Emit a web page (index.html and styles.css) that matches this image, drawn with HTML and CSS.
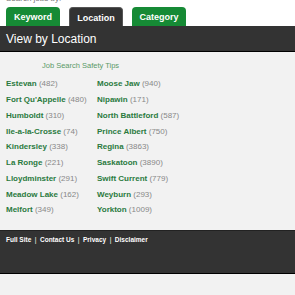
FILE: index.html
```html
<!DOCTYPE html>
<html lang="en">
<head>
    <meta charset="UTF-8">
    <meta name="viewport" content="width=device-width, initial-scale=1.0">
    <title>View by Location</title>
    <link rel="stylesheet" href="styles.css">
</head>
<body>
    <div class="top">
        <p class="intro">Search jobs by:</p>
        <ul class="tabs">
            <li><a href="#" class="tab">Keyword</a></li>
            <li><a href="#" class="tab active">Location</a></li>
            <li><a href="#" class="tab">Category</a></li>
        </ul>
    </div>

    <h2 class="bar">View by Location</h2>

    <div class="content">
        <p class="tips"><a href="#">Job Search Safety Tips</a></p>

        <ul class="locations">
            <li><a href="#">Estevan</a> (482)</li>
            <li><a href="#">Moose Jaw</a> (940)</li>
            <li><a href="#">Fort Qu'Appelle</a> (480)</li>
            <li><a href="#">Nipawin</a> (171)</li>
            <li><a href="#">Humboldt</a> (310)</li>
            <li><a href="#">North Battleford</a> (587)</li>
            <li><a href="#">Ile-a-la-Crosse</a> (74)</li>
            <li><a href="#">Prince Albert</a> (750)</li>
            <li><a href="#">Kindersley</a> (338)</li>
            <li><a href="#">Regina</a> (3863)</li>
            <li><a href="#">La Ronge</a> (221)</li>
            <li><a href="#">Saskatoon</a> (3890)</li>
            <li><a href="#">Lloydminster</a> (291)</li>
            <li><a href="#">Swift Current</a> (779)</li>
            <li><a href="#">Meadow Lake</a> (162)</li>
            <li><a href="#">Weyburn</a> (293)</li>
            <li><a href="#">Melfort</a> (349)</li>
            <li><a href="#">Yorkton</a> (1009)</li>
        </ul>
    </div>

    <div class="footer">
        <a href="#">Full Site</a><span class="sep">|</span><a href="#">Contact Us</a><span class="sep">|</span><a href="#">Privacy</a><span class="sep">|</span><a href="#">Disclaimer</a>
    </div>
</body>
</html>
```

FILE: styles.css
```css
body {
    margin: 0;
    font-family: "Liberation Sans", Arial, sans-serif;
    background-color: #f2f2f2;
    color: #333;
}

a {
    text-decoration: none;
}

/* 上部：タブ */
.top {
    background-color: #fff;
    padding: 0 6px;
    height: 26px;
    overflow: hidden;
}

.intro {
    margin: -6px 0 0;
    height: 13px;
    font-size: 8px;
    line-height: 10px;
    color: #777;
}

.tabs {
    list-style: none;
    margin: 0;
    padding: 0;
    display: flex;
    gap: 9px;
}

.tab {
    display: flex;
    align-items: center;
    justify-content: center;
    width: 54px;
    height: 19px;
    box-sizing: border-box;
    border-radius: 4px 4px 0 0;
    background-color: #168a35;
    color: #fff;
    font-size: 9px;
    font-weight: bold;
    padding-top: 1px;
}

.tab.active {
    background-color: #333;
    border: 1px solid #555;
    border-bottom: none;
}

/* 見出しバー */
.bar {
    margin: 0;
    height: 25px;
    padding: 0 6px;
    display: flex;
    align-items: center;
    background-color: #333;
    border-bottom: 1px solid #000;
    color: #fff;
    font-size: 12px;
    font-weight: normal;
}

/* 地域リスト */
.content {
    padding: 9px 6px 12px;
}

.tips {
    margin: 0 0 5px;
    padding-left: 36px;
    font-size: 7.5px;
    line-height: 10px;
}

.tips a {
    color: #5a9a68;
}

.locations {
    list-style: none;
    margin: 0;
    padding: 0;
    display: grid;
    grid-template-columns: 91px 1fr;
    grid-auto-rows: 15.75px;
    align-items: center;
    font-size: 8px;
    color: #888;
}

.locations a {
    color: #2a7a3e;
    font-weight: bold;
}

/* フッター */
.footer {
    height: 44px;
    padding: 5px 6px 0;
    box-sizing: border-box;
    background-color: #333;
    border-top: 1px solid #222;
    border-bottom: 1px solid #000;
    box-shadow: 0 1px 0 #ccc;
    font-size: 6.5px;
    font-weight: bold;
    color: #fff;
}

.footer a {
    color: #fff;
}

.sep {
    margin: 0 3.5px;
    font-weight: normal;
}
```
